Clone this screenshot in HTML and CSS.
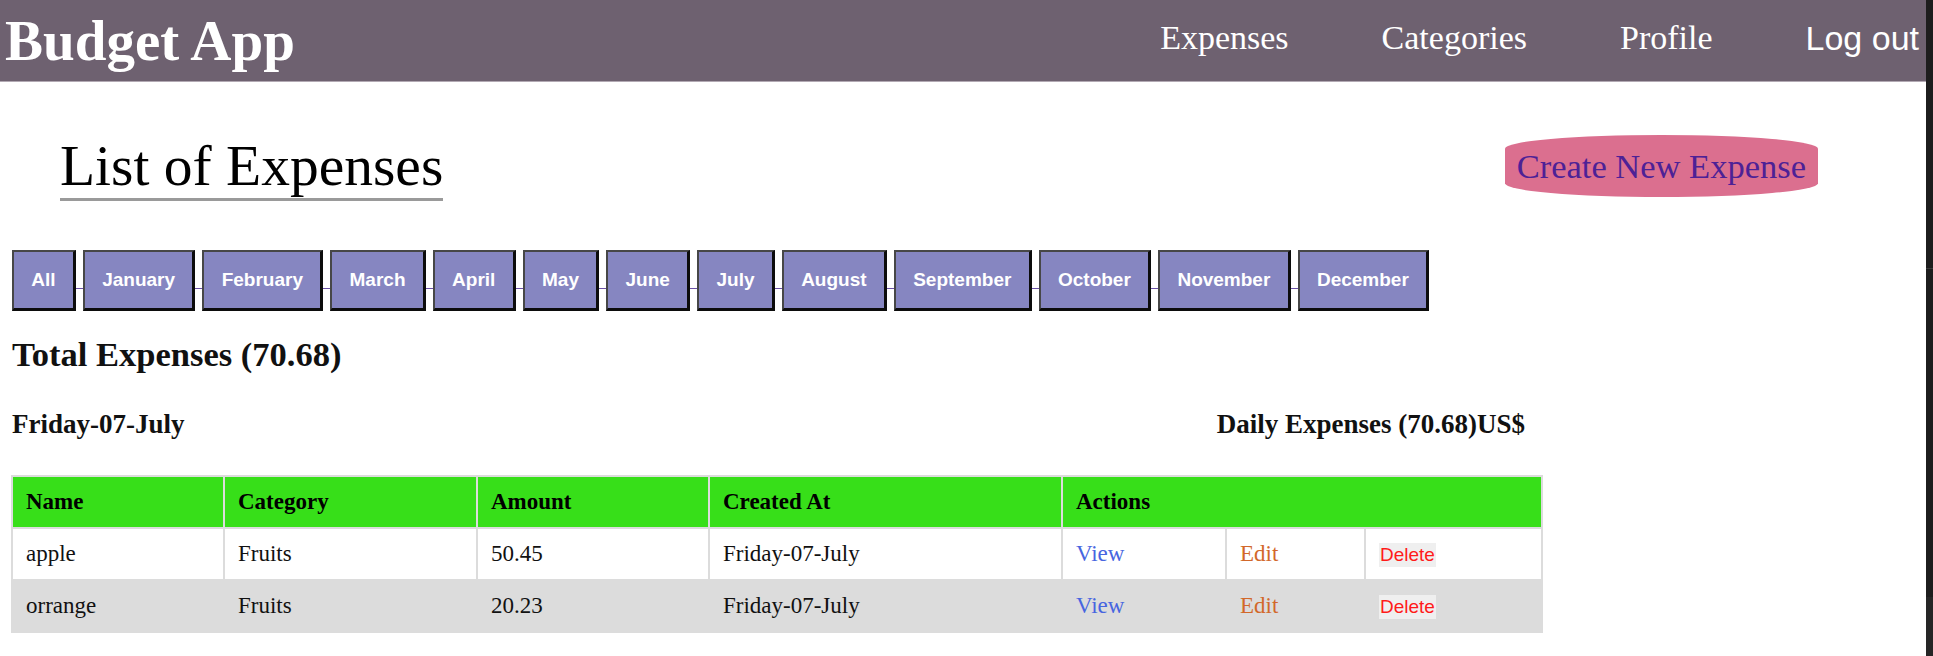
FILE: index.html
```html
<!DOCTYPE html>
<html lang="en">
<head>
<meta charset="utf-8">
<title>Budget App</title>
<link rel="stylesheet" href="styles.css">
</head>
<body>
<header class="topbar">
  <a class="brand" href="#">Budget App</a>
  <nav class="nav">
    <a class="nav-link" href="#">Expenses</a>
    <a class="nav-link" href="#">Categories</a>
    <a class="nav-link" href="#">Profile</a>
    <button class="logout" type="button">Log out</button>
  </nav>
</header>

<main class="page">
  <div class="title-row">
    <h1 class="title">List of Expenses</h1>
    <a class="create-btn" href="#">Create New Expense</a>
  </div>

  <div class="months">
    <button class="month" type="button">All</button>
    <button class="month" type="button">January</button>
    <button class="month" type="button">February</button>
    <button class="month" type="button">March</button>
    <button class="month" type="button">April</button>
    <button class="month" type="button">May</button>
    <button class="month" type="button">June</button>
    <button class="month" type="button">July</button>
    <button class="month" type="button">August</button>
    <button class="month" type="button">September</button>
    <button class="month" type="button">October</button>
    <button class="month" type="button">November</button>
    <button class="month" type="button">December</button>
  </div>

  <h2 class="total">Total Expenses (70.68)</h2>

  <section class="day">
    <div class="day-head">
      <h3 class="day-title">Friday-07-July</h3>
      <h3 class="day-title">Daily Expenses (70.68)US$</h3>
    </div>
    <table class="expenses">
      <colgroup>
        <col class="c-name"><col class="c-cat"><col class="c-amt"><col class="c-date">
        <col class="c-view"><col class="c-edit"><col class="c-del">
      </colgroup>
      <thead>
        <tr>
          <th>Name</th><th>Category</th><th>Amount</th><th>Created At</th><th colspan="3">Actions</th>
        </tr>
      </thead>
      <tbody>
        <tr>
          <td>apple</td><td>Fruits</td><td>50.45</td><td>Friday-07-July</td>
          <td><a class="act-view" href="#">View</a></td>
          <td><a class="act-edit" href="#">Edit</a></td>
          <td><button class="act-del" type="button">Delete</button></td>
        </tr>
        <tr class="alt">
          <td>orrange</td><td>Fruits</td><td>20.23</td><td>Friday-07-July</td>
          <td><a class="act-view" href="#">View</a></td>
          <td><a class="act-edit" href="#">Edit</a></td>
          <td><button class="act-del" type="button">Delete</button></td>
        </tr>
      </tbody>
    </table>
  </section>
</main>

<div class="scroll-strip"></div>
</body>
</html>
```

FILE: styles.css
```css
* { box-sizing: border-box; }

html, body {
  margin: 0;
  padding: 0;
  background: #ffffff;
}

body {
  font-family: "Liberation Serif", "Times New Roman", serif;
  color: #111;
  width: 1933px;
  overflow: hidden;
}

/* ---------- top bar ---------- */
.topbar {
  height: 82px;
  background: #6e6170;
  border-bottom: 1px solid #b2a9b3;
  display: flex;
  align-items: center;
  justify-content: space-between;
  padding: 0 14px 0 5px;
}

.brand {
  color: #fff;
  font-size: 57px;
  font-weight: bold;
  text-decoration: none;
  line-height: normal;
}

.nav {
  display: flex;
  align-items: center;
  gap: 93px;
  padding-bottom: 5px;
}

.nav-link {
  color: #fff;
  font-size: 34px;
  text-decoration: none;
}

.logout {
  font-family: "Liberation Sans", Arial, sans-serif;
  font-size: 34px;
  color: #fff;
  background: transparent;
  border: none;
  padding: 0;
  cursor: pointer;
}

/* ---------- page ---------- */
.page {
  padding: 0 0 0 12px;
}

.title-row {
  display: flex;
  align-items: flex-start;
  justify-content: space-between;
  margin-top: 53px;
  padding: 0 115px 0 48px;
}

.title {
  margin: -2px 0 0;
  font-size: 57.5px;
  font-weight: normal;
  line-height: normal;
  color: #000;
  border-bottom: 3px solid #9a9a9a;
}

.create-btn {
  display: block;
  height: 62px;
  line-height: 62px;
  padding: 0 12px;
  font-size: 34.5px;
  color: #4d2196;
  background: #db6f8f;
  border-radius: 50% / 22%;
  text-decoration: none;
}

/* ---------- month filter ---------- */
.months {
  display: flex;
  width: fit-content;
  gap: 7px;
  margin-top: 49px;
  background: linear-gradient(#6a4fa6, #6a4fa6) 0 38px / 100% 1px no-repeat;
}

.month {
  height: 61px;
  padding: 0 17.3px;
  font-family: "Liberation Sans", Arial, sans-serif;
  font-size: 19px;
  font-weight: bold;
  color: #fff;
  background: #8686c1;
  border-style: solid;
  border-width: 2px 3px 3px 2px;
  border-color: #474747 #0c0c0c #0c0c0c #474747;
  cursor: pointer;
}

/* ---------- totals ---------- */
.total {
  margin: 24px 0 0;
  font-size: 34.5px;
  font-weight: bold;
  line-height: normal;
}

.day {
  width: 1530px;
}

.day-head {
  display: flex;
  justify-content: space-between;
  margin-top: 35px;
  padding-right: 17px;
}

.day-title {
  margin: 0;
  font-size: 27px;
  font-weight: bold;
  line-height: normal;
}

/* ---------- table ---------- */
.expenses {
  margin: 35px 0 0 -1px;
  width: 1530px;
  border-collapse: collapse;
  table-layout: fixed;
  font-size: 23px;
}

.c-name { width: 212px; }
.c-cat { width: 253px; }
.c-amt { width: 232px; }
.c-date { width: 353px; }
.c-view { width: 164px; }
.c-edit { width: 139px; }
.c-del { width: 177px; }

.expenses tr {
  height: 52px;
}

.expenses th,
.expenses td {
  border: 2px solid #dcdcdc;
  padding: 0 13px;
  text-align: left;
  line-height: normal;
  white-space: nowrap;
}

.expenses thead tr {
  background: #37df19;
}

.expenses th {
  font-weight: bold;
  color: #000;
}

.expenses tr.alt {
  background: #dcdcdc;
}

.act-view {
  color: #4765e0;
  text-decoration: none;
}

.act-edit {
  color: #d2682a;
  text-decoration: none;
}

.act-del {
  font-family: "Liberation Sans", Arial, sans-serif;
  font-size: 19px;
  color: #ff1a1a;
  background: #efefef;
  border: none;
  padding: 1px 1px;
  cursor: pointer;
}

/* ---------- right window strip (overlay) ---------- */
.scroll-strip {
  position: fixed;
  top: 0;
  right: 0;
  width: 7px;
  height: 100%;
  background:
    linear-gradient(#3a3a3a, #3a3a3a) 0 268px / 100% 1px no-repeat,
    linear-gradient(#1d1d1d 597px, #262626 597px);
}
```
